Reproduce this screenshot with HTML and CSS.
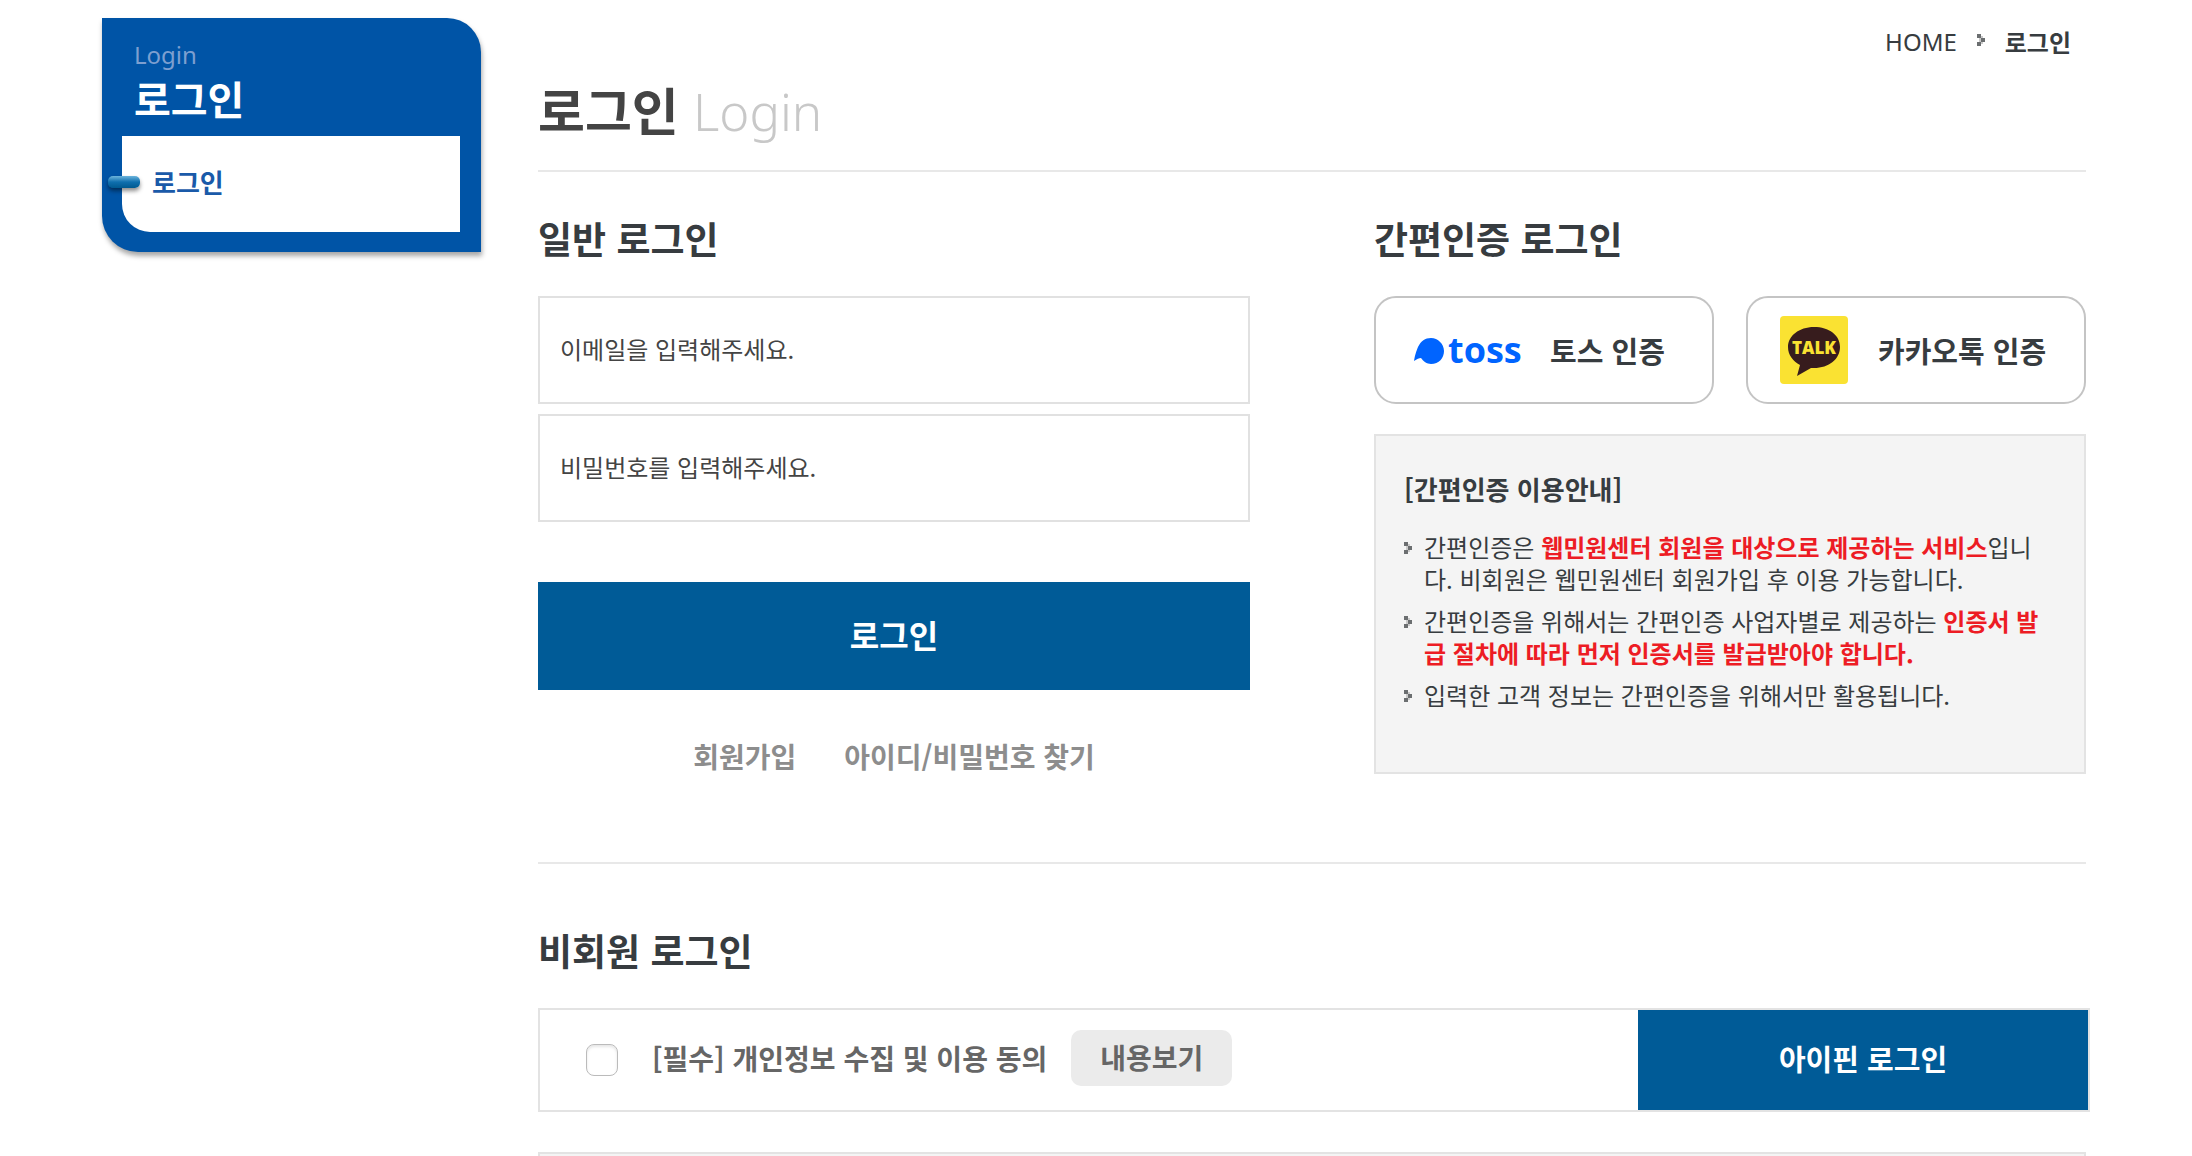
FILE: index.html
```html
<!DOCTYPE html>
<html lang="ko">
<head>
<meta charset="utf-8">
<meta name="viewport" content="width=device-width, initial-scale=1">
<title>로그인</title>
<link rel="stylesheet" href="styles.css">
</head>
<body>
<svg width="0" height="0" class="defs" aria-hidden="true">
  <symbol id="dots" viewBox="0 0 8 12">
    <path fill="#6b6e70" d="M0 0h4v4H0zM4 4h4v4H4zM0 8h4v4H0z"/>
    <path fill="#c9c9c9" d="M4 2h2v2H4zM4 8h2v2H4zM2 4h2v4H2z"/>
  </symbol>
</svg>
<div class="page">
  <aside class="side">
    <div class="side-head">
      <span class="side-en">Login</span>
      <strong class="side-title">로그인</strong>
    </div>
    <nav class="side-menu" aria-label="로그인 메뉴">
      <a class="side-link" href="#">로그인</a>
    </nav>
  </aside>
  <main class="main">
    <nav class="crumbs" aria-label="현재 위치">
      <a class="crumb-home" href="#">HOME</a>
      <svg class="dots"><use href="#dots"/></svg>
      <strong>로그인</strong>
    </nav>
    <h1 class="title">로그인 <span class="title-en">Login</span></h1>
    <div class="columns">
      <section>
        <h2 class="heading">일반 로그인</h2>
        <form class="login-form">
          <input class="field" type="text" aria-label="이메일" placeholder="이메일을 입력해주세요.">
          <input class="field" type="password" aria-label="비밀번호" placeholder="비밀번호를 입력해주세요.">
          <button class="login-btn" type="button">로그인</button>
        </form>
        <div class="links">
          <a href="#">회원가입</a>
          <a href="#">아이디/비밀번호 찾기</a>
        </div>
      </section>
      <section>
        <h2 class="heading">간편인증 로그인</h2>
        <div class="auth">
          <button class="auth-btn auth-toss" type="button">
            <svg class="toss" viewBox="0 0 110 32" aria-hidden="true">
              <path fill="#0064ff" d="M17 4C24 4 30 10 30 17s-5 13-13 13c-4 0-8-3-10-6-2 0-4 1-7 3C1 21 2 18 4 13 7 7 11 4 17 4z"/>
              <text class="toss-word" x="34" y="29">toss</text>
            </svg>
            <span>토스 인증</span>
          </button>
          <button class="auth-btn auth-kakao" type="button">
            <svg class="kakao" viewBox="0 0 68 68" aria-hidden="true">
              <rect width="68" height="68" rx="4" fill="#fae232"/>
              <path fill="#371c1d" d="M34 11C19 11 8 20 8 31c0 8 5 14 12 18l-3 11 14-8h3c15 0 26-9 26-21S49 11 34 11z"/>
              <text class="kakao-word" x="34" y="38" text-anchor="middle">TALK</text>
            </svg>
            <span>카카오톡 인증</span>
          </button>
        </div>
        <div class="guide">
          <h3 class="guide-title">[간편인증 이용안내]</h3>
          <ul class="guide-list">
            <li><svg class="dots"><use href="#dots"/></svg><p>간편인증은 <b>웹민원센터 회원을 대상으로 제공하는 서비스</b>입니다. 비회원은 웹민원센터 회원가입 후 이용 가능합니다.</p></li>
            <li><svg class="dots"><use href="#dots"/></svg><p>간편인증을 위해서는 간편인증 사업자별로 제공하는 <b>인증서 발급 절차에 따라 먼저 인증서를 발급받아야 합니다.</b></p></li>
            <li><svg class="dots"><use href="#dots"/></svg><p>입력한 고객 정보는 간편인증을 위해서만 활용됩니다.</p></li>
          </ul>
        </div>
      </section>
    </div>
    <section class="guest">
      <h2 class="heading">비회원 로그인</h2>
      <div class="agree">
        <input class="check" type="checkbox" id="agree">
        <label for="agree">[필수] 개인정보 수집 및 이용 동의</label>
        <button class="view-btn" type="button">내용보기</button>
        <button class="ipin-btn" type="button">아이핀 로그인</button>
      </div>
      <div class="notice"></div>
    </section>
  </main>
</div>
</body>
</html>
```
FILE: styles.css
```css
* { box-sizing: border-box; }
html { scrollbar-width: none; }
body {
  margin: 0;
  background: #fff;
  color: #373c40;
  font: 24px/32px "Noto Sans CJK KR", sans-serif;
}
h1, h2, h3, p, ul { margin: 0; padding: 0; }
a { color: inherit; text-decoration: none; }
button, input { font: inherit; color: inherit; margin: 0; }
button { border: 0; padding: 0 0 4px; cursor: pointer; font-weight: 700; }
.defs { position: absolute; }
.page { display: flex; align-items: flex-start; gap: 57px; padding: 18px 106px 0 102px; }

.side {
  flex: 0 0 379px;
  padding: 20px 21px 20px 20px;
  background: #0054a6;
  border-radius: 0 34px 0 36px;
  box-shadow: 1px 4px 5px rgba(0, 0, 0, .35);
}
.side-head { display: flex; flex-direction: column; height: 98px; padding-left: 12px; }
.side-en { color: #7d9fd0; font: 24px/34px "Noto Sans", sans-serif; }
.side-title { color: #fff; font-size: 40px; line-height: 52px; }
.side-menu {
  position: relative;
  display: flex;
  align-items: center;
  height: 96px;
  padding: 0 0 4px 30px;
  background: #fff;
  border-radius: 0 0 0 28px;
}
.side-menu::before {
  content: "";
  position: absolute;
  left: -14px;
  top: 40px;
  width: 32px;
  height: 12px;
  border-radius: 5px;
  background: linear-gradient(#6cb4dc, #0f6fae 50%, #00598f);
  box-shadow: 0 3px 4px rgba(0, 0, 0, .45);
}
.side-link { color: #1a5aa9; font-size: 26px; font-weight: 700; }

.main { flex: 1; min-width: 0; }
.crumbs { display: flex; justify-content: flex-end; align-items: center; gap: 20px; padding: 8px 15px 0 0; }
.crumb-home { font: 24px/32px "Noto Sans", sans-serif; }
.dots { flex: none; width: 8px; height: 12px; }
.crumbs .dots { margin-bottom: 4px; }
.title {
  padding: 16px 0 24px;
  border-bottom: 2px solid #e8e8e8;
  color: #444;
  font-size: 51px;
  line-height: 70px;
}
.title-en { color: #c8c8c8; font-family: "Noto Sans", sans-serif; font-weight: 300; }
.heading { font-size: 37px; line-height: 52px; }

.columns { display: grid; grid-template-columns: 1fr 1fr; gap: 124px; padding: 40px 0 88px; border-bottom: 2px solid #e8e8e8; }
.login-form { display: flex; flex-direction: column; gap: 10px; margin-top: 32px; }
.field { width: 100%; height: 108px; padding: 0 20px 4px; border: 2px solid #e1e1e1; background: #fff; border-radius: 0; }
.field::placeholder { color: #444; opacity: 1; }
.login-btn { height: 108px; margin-top: 50px; background: #005b97; color: #fff; font-size: 32px; }
.links { display: flex; justify-content: center; gap: 48px; margin-top: 50px; color: #8d8d8d; font-size: 28px; font-weight: 700; }

.auth { display: grid; grid-template-columns: 1fr 1fr; gap: 32px; margin-top: 32px; }
.auth-btn { display: flex; align-items: center; height: 108px; padding-bottom: 0; border: 2px solid #c4c4c4; border-radius: 22px; background: #fff; font-size: 29px; }
.auth-toss { gap: 26px; padding-left: 38px; }
.auth-kakao { gap: 30px; padding-left: 32px; }
.toss { width: 110px; height: 32px; overflow: visible; }
.toss-word { fill: #0064ff; font: 700 36px "Open Sans", sans-serif; }
.kakao { width: 68px; height: 68px; }
.kakao-word { fill: #fae232; font: 800 17px "Open Sans", sans-serif; }
.guide { margin-top: 30px; padding: 35px 28px 61px; border: 2px solid #e3e3e3; background: #f4f4f4; }
.guide-title { font-size: 26px; line-height: 36px; }
.guide-list { display: grid; gap: 10px; margin-top: 24px; list-style: none; }
.guide-list li { display: flex; gap: 12px; }
.guide-list .dots { margin-top: 11px; }
.guide-list b { color: #ed1c24; }

.guest { padding-top: 60px; }
.agree { display: flex; align-items: center; height: 104px; margin: 32px -4px 0 0; padding-left: 46px; border: 2px solid #e3e3e3; color: #666; font-size: 28px; font-weight: 700; }
.agree label { padding-bottom: 4px; }
.check { appearance: none; width: 32px; height: 32px; margin-right: 34px; border: 1px solid #bbb; border-radius: 8px; background: #fff; box-shadow: inset 0 2px 3px rgba(0, 0, 0, .1); }
.view-btn { height: 56px; margin: 0 0 4px 24px; padding: 0 29px 3px; border-radius: 10px; background: #ebebeb; }
.ipin-btn { align-self: stretch; width: 450px; margin-left: auto; background: #005b97; color: #fff; font-size: 29px; }
.notice { height: 80px; margin-top: 40px; border: 2px solid #e3e3e3; background: #f4f4f4; }
```
